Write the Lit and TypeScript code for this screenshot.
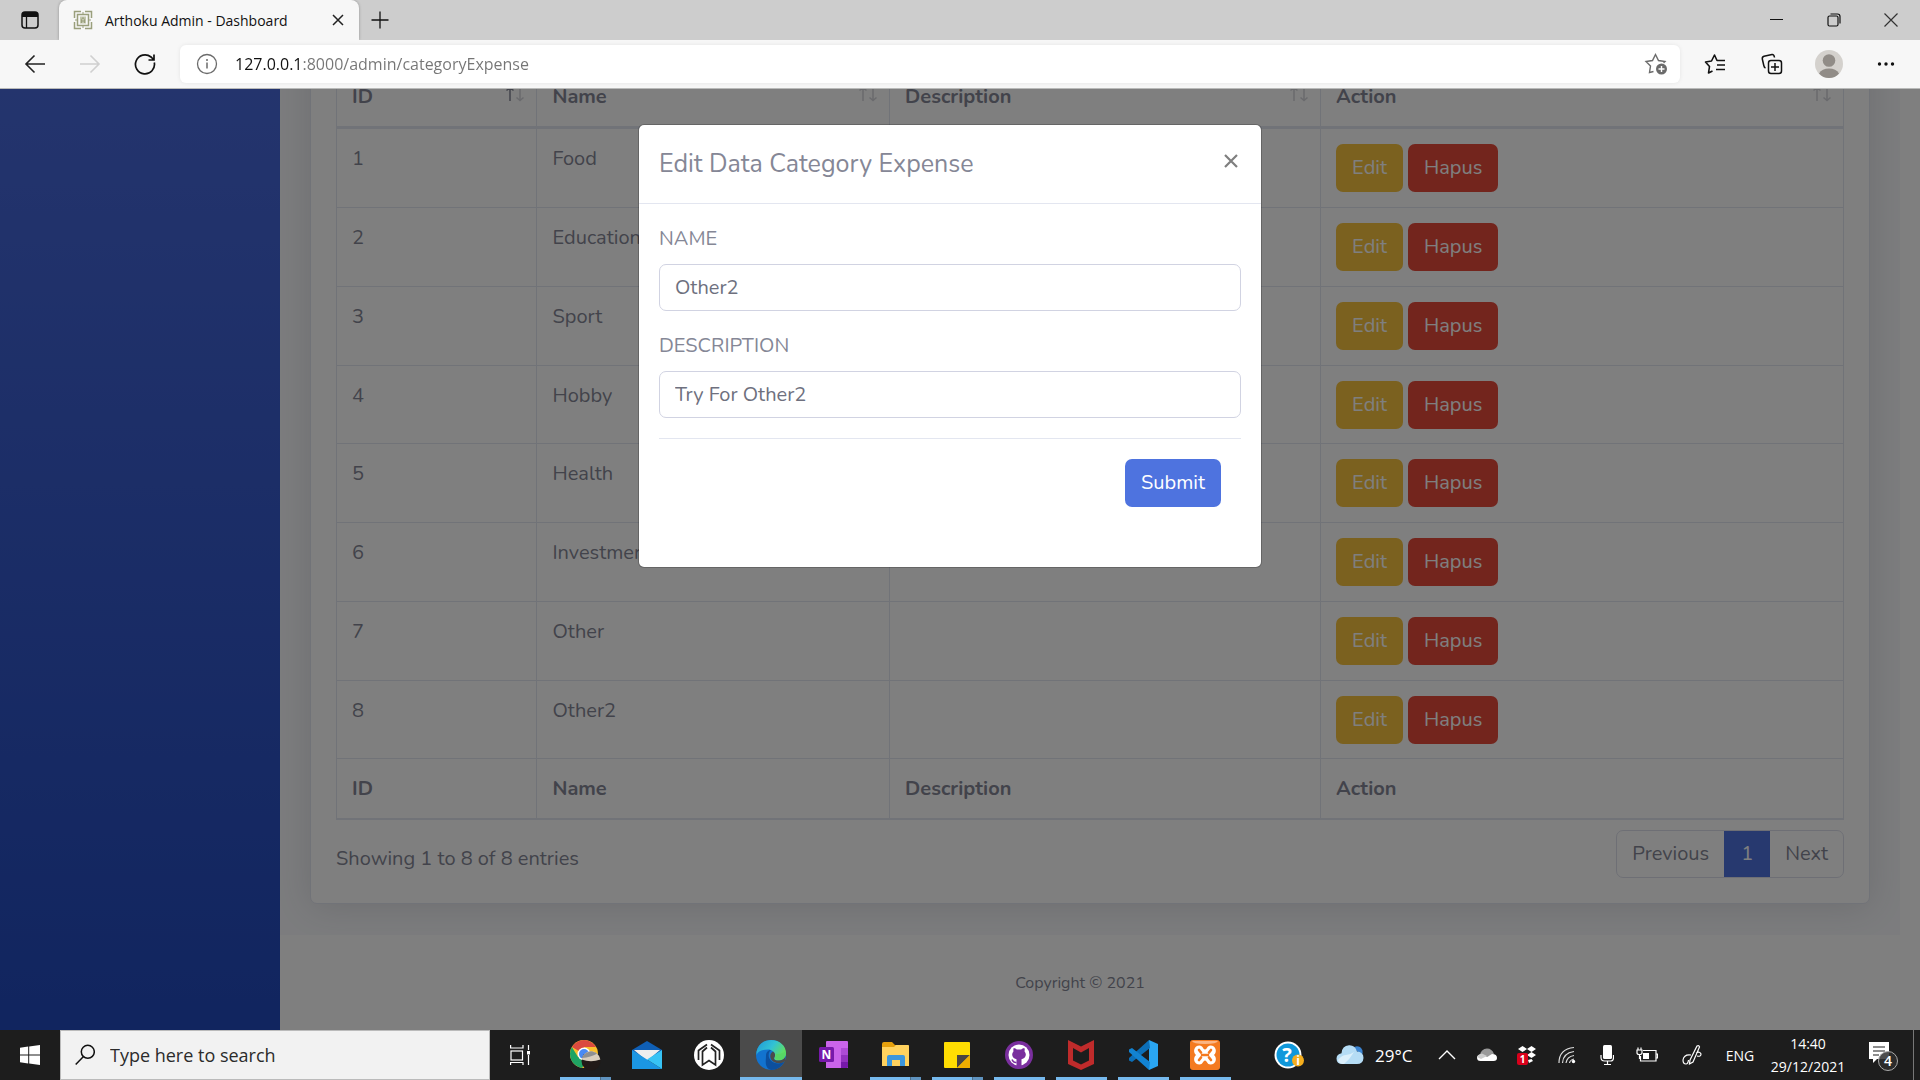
import { LitElement, html, svg, css } from "lit";
import { customElement, property, state } from "lit/decorators.js";
import { classMap } from "lit/directives/class-map.js";

const reset = css`
  * { box-sizing: border-box; }
  button, input { font: inherit; color: inherit; margin: 0; }
  button { border: 0; background: none; padding: 0; }
  a { color: inherit; text-decoration: none; }
  svg { display: block; flex: none; }
`;

/* ---------- Browser chrome ---------- */

@customElement("browser-bar")
class BrowserBar extends LitElement {
  static styles = [reset, css`
    :host { display: block; font-family: "Segoe UI", "Open Sans", "Noto Sans", sans-serif; color: #111; }
    .tabs { display: flex; height: 40px; background: #cdcdcd; align-items: stretch; }
    .menu { width: 59px; display: grid; place-items: center; border-radius: 0 0 6px 0; }
    .tab { width: 300px; background: #f7f7f7; border-radius: 8px 8px 0 0; display: flex; align-items: center; padding: 0 12px 0 14px; gap: 12px; font-size: 14px; box-shadow: 0 0 3px rgba(0, 0, 0, .3); }
    .title { flex: 1; white-space: nowrap; }
    .new { width: 42px; display: grid; place-items: center; }
    .windows { margin-left: auto; padding-right: 1px; display: flex; }
    .windows button { width: 57px; display: grid; place-items: center; }
    .tools { position: relative; display: flex; height: 49px; background: #f7f7f7; border-bottom: 1px solid #b9bab9; align-items: center; }
    .nav { display: flex; width: 180px; padding-left: 7px; }
    .nav button { width: 55px; display: grid; place-items: center; }
    .address { flex: 1; height: 38px; background: #fff; border-radius: 6px; display: flex; align-items: center; padding: 0 12px 0 16px; gap: 17px; box-shadow: 0 0 4px rgba(0, 0, 0, .08); }
    .url { flex: 1; min-width: 0; height: 30px; border: 0; padding: 0; outline: 0; font-size: 16px; color: transparent; background: linear-gradient(90deg, #111 67px, #757575 67px); -webkit-background-clip: text; background-clip: text; }
    .actions { display: flex; width: 240px; padding: 0 6px; }
    .actions button { flex: 1; display: grid; place-items: center; }
  `];

  render() {
    return html`
      <div class="tabs">
        <button class="menu" aria-label="Tab actions">
          <svg width="20" height="20" viewBox="0 0 20 20"><rect x="2" y="2" width="16" height="16" rx="3" fill="none" stroke="#111" stroke-width="1.5"/><path d="M2 7V4.500Q2 2 4.500 2H15.500Q18 2 18 4.500V7Z" fill="#111"/><path d="M6.500 6V18" stroke="#111" stroke-width="1.300"/></svg>
        </button>
        <div class="tab">
          <svg width="20" height="20" viewBox="0 0 20 20" fill="none" stroke="#9a9f7c" stroke-width="1.500"><path d="M8 1.500H1.500V8M1.500 12V18.500H8M12 18.500H18.500V12M18.500 8V1.500H12"/><rect x="4.500" y="4.500" width="11" height="11"/><rect x="7" y="6.500" width="6" height="7" fill="#c3c7ae" stroke="none"/><path d="M8.500 13V9.500L10 7.500L11.500 9.500V13M8.500 11H11.500M10 2V4.500M10 15.500V18M2 10H4.500M15.500 10H18" stroke-width="1"/></svg>
          <span class="title">Arthoku Admin - Dashboard</span>
          <button aria-label="Close tab"><svg width="18" height="18" viewBox="0 0 18 18" stroke="#222" stroke-width="1.500"><path d="M4 4L14 14M14 4L4 14"/></svg></button>
        </div>
        <button class="new" aria-label="New tab"><svg width="20" height="20" viewBox="0 0 20 20" stroke="#111" stroke-width="1.300"><path d="M10 1.500V18.500M1.500 10H18.500"/></svg></button>
        <div class="windows">
          <button aria-label="Minimize"><svg width="14" height="14" viewBox="0 0 14 14" stroke="#111"><path d="M0 6.500H13"/></svg></button>
          <button aria-label="Restore"><svg width="14" height="14" viewBox="0 0 14 14" fill="none" stroke="#111" stroke-width="1.200"><rect x="1" y="3" width="10" height="10" rx="1.500"/><path d="M3.500 1H10.500Q13 1 13 3.500V10.500"/></svg></button>
          <button aria-label="Close"><svg width="14" height="14" viewBox="0 0 14 14" stroke="#333" stroke-width="1.200"><path d="M.5.500L13.500 13.500M13.500.500L.5 13.500"/></svg></button>
        </div>
      </div>
      <div class="tools">
        <div class="nav">
          <button aria-label="Back"><svg width="22" height="22" viewBox="0 0 22 22" fill="none" stroke="#222" stroke-width="1.600"><path d="M21 11H2M10.500 2.500L2 11L10.500 19.500"/></svg></button>
          <button aria-label="Forward" disabled><svg width="22" height="22" viewBox="0 0 22 22" fill="none" stroke="#d0d0d0" stroke-width="1.600"><path d="M1 11H20M11.500 2.500L20 11L11.500 19.500"/></svg></button>
          <button aria-label="Refresh"><svg width="22" height="22" viewBox="0 0 22 22" fill="none" stroke="#111" stroke-width="1.700"><path d="M20.300 9.500A9.500 9.500 0 1 1 17 4L19.500 6.500M20 1.500V7H14.500"/></svg></button>
        </div>
        <div class="address">
          <svg width="22" height="22" viewBox="0 0 22 22" fill="none" stroke="#6b6b6b" stroke-width="1.300"><circle cx="11" cy="11" r="9.500"/><path d="M11 9.500V15.500M11 6V8" stroke-width="1.500"/></svg>
          <input class="url" type="text" aria-label="Address" spellcheck="false" value="127.0.0.1:8000/admin/categoryExpense">
          <button aria-label="Add this page to favorites"><svg width="24" height="24" viewBox="0 0 24 24" fill="none" stroke="#6b6b6b" stroke-width="1.400"><path d="M9.500 19.500L5.500 20.500L6.500 14L2 9.500L8.500 8.500L11.500 2.500L14.500 8.500L21 9.500L19.500 11"/><circle cx="17.500" cy="17" r="5.500" fill="#6b6b6b" stroke="none"/><path d="M17.500 14V20M14.500 17H20.500" stroke="#fff"/></svg></button>
        </div>
        <div class="actions">
          <button aria-label="Favorites"><svg width="22" height="22" viewBox="0 0 22 22" fill="none" stroke="#111" stroke-width="1.600" stroke-linejoin="round"><path d="M8.500 18L4.500 20L5.500 13.500L1.500 9L7.500 8L10.500 2L13 7.500H21M13 12H21M12 16.500H21"/></svg></button>
          <button aria-label="Collections"><svg width="22" height="22" viewBox="0 0 22 22" fill="none" stroke="#111" stroke-width="1.500" stroke-linejoin="round"><path d="M4.500 15Q3.200 14.500 2.800 12.500L1.300 6Q1 4 3 3.300L11 1.500Q13 1.200 13.500 4.500"/><rect x="7.500" y="7.500" width="13" height="13" rx="2.500"/><path d="M14 10V18M10 14H18"/></svg></button>
          <button aria-label="Profile"><svg width="28" height="28" viewBox="0 0 28 28"><circle cx="14" cy="14" r="14" fill="#d4d1cd"/><circle cx="14" cy="10.500" r="6.300" fill="#918c87"/><path d="M4 23.500Q7 18.500 14 18.500T24 23.500Q20 28 14 28T4 23.500Z" fill="#918c87"/></svg></button>
          <button aria-label="Settings and more"><svg width="18" height="18" viewBox="0 0 18 18" fill="#111"><circle cx="2.500" cy="9" r="1.700"/><circle cx="9" cy="9" r="1.700"/><circle cx="15.500" cy="9" r="1.700"/></svg></button>
        </div>
      </div>`;
  }
}

/* ---------- Modal ---------- */

@customElement("edit-dialog")
class EditDialog extends LitElement {
  @property() name = "";
  @property() description = "";

  static styles = [reset, css`
    :host { display: block; width: 624px; max-width: 100%; }
    .dialog { background: #fff; border: 1px solid rgba(0, 0, 0, .2); background-clip: padding-box; border-radius: 6px; }
    .head { display: flex; justify-content: space-between; align-items: flex-start; padding: 20px; border-bottom: 1px solid #e3e6f0; }
    .heading { margin: 0; font-size: 25px; line-height: 38px; font-weight: 400; }
    .close { width: 20px; height: 32px; display: grid; place-items: center; }
    .body { padding: 20px; }
    .label { display: block; line-height: 30px; margin-bottom: 10px; }
    .field { display: block; width: 100%; height: 47px; padding: 0 15px; margin-bottom: 20px; border: 1px solid #d1d3e2; border-radius: 7px; color: #6e707e; background: #fff; outline: 0; }
    .foot { border-top: 1px solid #e3e6f0; padding: 20px 20px 40px; display: flex; justify-content: flex-end; }
    .submit { height: 48px; padding: 0 16px; border-radius: 7px; background: #4e73df; color: #fff; }
  `];

  render() {
    return html`
      <form class="dialog" role="dialog" aria-labelledby="heading" @submit=${(e: Event) => e.preventDefault()}>
        <div class="head">
          <h5 class="heading" id="heading">Edit Data Category Expense</h5>
          <button class="close" type="button" aria-label="Close">
            <svg width="16" height="16" viewBox="0 0 16 16" stroke="#7f7f7f" stroke-width="2.200"><path d="M2 2L14 14M14 2L2 14"/></svg>
          </button>
        </div>
        <div class="body">
          <label class="label" for="name">NAME</label>
          <input class="field" id="name" type="text" .value=${this.name}>
          <label class="label" for="description">DESCRIPTION</label>
          <input class="field" id="description" type="text" .value=${this.description}>
          <div class="foot"><button class="submit" type="submit">Submit</button></div>
        </div>
      </form>`;
  }
}

/* ---------- Admin page ---------- */

@customElement("category-page")
class CategoryPage extends LitElement {
  @state() private rows = ["Food", "Education", "Sport", "Hobby", "Health", "Investment", "Other", "Other2"];
  private columns = ["ID", "Name", "Description", "Action"];

  static styles = [reset, css`
    :host { position: relative; display: flex; min-height: 0; overflow: hidden; background: #fff; font-family: Nunito, Lato, "Open Sans", sans-serif; font-size: 20px; line-height: 30px; color: #858796; }
    .sidebar { width: 280px; flex: none; background: linear-gradient(180deg, #4869db, #224abe); }
    .main { flex: 1; min-width: 0; display: flex; flex-direction: column; justify-content: flex-end; padding-right: 20px; }
    .content { flex: none; background: #f8f9fc; padding: 0 30px 31px; overflow: hidden; }
    .card { background: #fff; border: 1px solid #e3e6f0; border-radius: 7px; padding: 25px; box-shadow: 0 3px 35px rgba(58, 59, 69, .15); }
    .table { width: 100%; table-layout: fixed; border-collapse: collapse; border: 1px solid #e3e6f0; }
    .c1 { width: 13.3%; } .c2 { width: 23.4%; } .c3 { width: 28.6%; }
    th, td { border: 1px solid #e3e6f0; padding: 15px; text-align: left; vertical-align: top; }
    tbody tr:nth-child(4n) td { padding-bottom: 14px; }
    th { font-weight: 700; }
    thead th { border-bottom: 3px solid #e3e6f0; padding: 14px 10px 14px 15px; }
    tfoot th { border-bottom: 2px solid #e3e6f0; padding-bottom: 14px; }
    .sortable { display: flex; justify-content: space-between; }
    .sort { opacity: .35; }
    .sort.active { opacity: 1; }
    .dim { opacity: .35; }
    .buttons { display: flex; gap: 5px; }
    .btn { height: 48px; padding: 0 16px; border-radius: 7px; color: #fff; }
    .edit { background: #f6c23e; }
    .delete { background: #e74a3b; }
    .under { display: flex; justify-content: space-between; align-items: flex-start; padding-top: 10px; }
    .info { padding-top: 14px; }
    .pages { display: flex; border: 1px solid #dddfeb; border-radius: 7px; overflow: hidden; }
    .page { padding: 8px 15px; }
    .current { background: #4e73df; color: #fff; padding: 8px 17px; }
    .footer { flex: none; background: #fff; padding: 33px 20px 32px 0; font-size: 16px; text-align: center; }
    .overlay { position: absolute; inset: 0; background: rgba(0, 0, 0, .5); padding: 35px 20px 0 0; display: flex; justify-content: center; align-items: flex-start; }
  `];

  private arrows(active: boolean) {
    return html`<svg class=${classMap({ sort: true, active })} width="22" height="30" viewBox="0 0 22 30" fill="none" stroke="#858796" stroke-width="1.500"><path d="M6 19V5.500M2.500 8.500L6 5.500L9.500 8.500" /><path class=${active ? "dim" : ""} d="M16 5V18.500M12.500 15.500L16 18.500L19.500 15.500"/></svg>`;
  }

  render() {
    return html`
      <nav class="sidebar" aria-label="Main"></nav>
      <div class="main">
        <main class="content">
          <div class="card">
            <table class="table">
              <colgroup><col class="c1"><col class="c2"><col class="c3"><col></colgroup>
              <thead><tr>${this.columns.map((c, i) => html`<th><div class="sortable">${c}${this.arrows(i === 0)}</div></th>`)}</tr></thead>
              <tbody>
                ${this.rows.map((name, i) => html`
                  <tr>
                    <td>${i + 1}</td><td>${name}</td><td></td>
                    <td><div class="buttons"><button class="btn edit">Edit</button><button class="btn delete">Hapus</button></div></td>
                  </tr>`)}
              </tbody>
              <tfoot><tr>${this.columns.map((c) => html`<th>${c}</th>`)}</tr></tfoot>
            </table>
            <div class="under">
              <div class="info">Showing 1 to 8 of 8 entries</div>
              <div class="pages"><a class="page" href="#">Previous</a><a class="page current" href="#">1</a><a class="page" href="#">Next</a></div>
            </div>
          </div>
        </main>
        <footer class="footer">Copyright © 2021</footer>
      </div>
      <div class="overlay"><edit-dialog name="Other2" description="Try For Other2"></edit-dialog></div>`;
  }
}

/* ---------- Taskbar ---------- */

const icon = {
  chrome: svg`<circle cx="15" cy="15" r="14" fill="#fbc02d"/><path d="M15 15L2.900 8A14 14 0 0 1 27.100 8H15Z" fill="#db4a3f"/><path d="M2.900 8A14 14 0 0 0 13 28.900L18.500 20L9 18Z" fill="#1fa463"/><circle cx="15" cy="15" r="6.500" fill="#fff"/><circle cx="15" cy="15" r="5" fill="#4a8af4"/><circle cx="22" cy="22" r="9.500" fill="#221a17"/><path d="M12.600 20.500A9.500 9.500 0 0 1 31.400 20.500Q22 24 12.600 20.500Z" fill="#d9cdbd"/><path d="M13 19A9.500 9.500 0 0 1 28 14.700Q22 18 13 19Z" fill="#8e8f91"/>`,
  mail: svg`<path d="M1 11L16 2L31 11V17H1Z" fill="#0f5fb5"/><path d="M3 11H29L16 22Z" fill="#eee"/><path d="M1 11L31 30H1Z" fill="#1b96e3"/><path d="M31 11V30L16 20.500Z" fill="#37c3f5"/>`,
  white: svg`<circle cx="16" cy="16" r="15" fill="#fff"/><path d="M5.500 21V11.500L14 5.500M26.500 21V11.500L18 5.500M14 8.500L9.500 12.500V26L16 21.500L22.500 26V12.500L18 8.500" fill="none" stroke="#222" stroke-width="1.700"/>`,
  edge: svg`<circle cx="16" cy="16" r="15" fill="#1273cf"/><path d="M1.500 13C3 5 9 1 16 1C25 1 31 7 31 14C31 19 27.500 21.500 23.500 21.500C20 21.500 18.500 20 19.500 18C21 14 17.500 10.500 13 10.500C7.500 10.500 3 12 1.500 16Z" fill="url(#edgeTop)"/><path d="M11 17C11 13.500 13 11 16 11C12 14 13 22 20 24C24 25 27 24 29.300 22.500C26.500 28 22 31 16 31C9 29 11 21 11 17Z" fill="#0c4f9e"/><path d="M18 12.500C20.500 14 20.500 17 19.300 18.500C18.300 20.500 20 21.700 24 21.500C27 21.300 29 20 30.300 18L30 22.300C27 24.500 23 25 19 23C14.500 20.500 14 15 18 12.500Z" fill="#4b4b4b"/><path d="M21 20C19.500 18.800 21 16.500 20.800 14.500C24 16 28 14 30.900 12.500C31.500 19 26.500 22.500 21 20Z" fill="#57d565"/><defs><linearGradient id="edgeTop" x1="0" y1="0" x2="1" y2=".5"><stop offset="0" stop-color="#1f97d8"/><stop offset=".55" stop-color="#32c2d4"/><stop offset="1" stop-color="#63df5a"/></linearGradient></defs>`,
  onenote: svg`<path d="M9 3Q9 2 10 2H30Q31 2 31 3V29H9Z" fill="#ca64ea"/><path d="M24 9H31V16H24Z" fill="#ae4bd5"/><path d="M24 16H31V23H24Z" fill="#9332bf"/><path d="M24 23H31V28Q31 29 30 29H24Z" fill="#7719aa"/><rect x="2" y="8" width="15" height="15" rx="1.500" fill="#7719aa"/><text x="9.500" y="20" font-size="12" font-weight="700" text-anchor="middle" fill="#fff">N</text>`,
  files: svg`<path d="M3 5Q3 3 5 3H13L16 6H28Q30 6 30 8V27H3Z" fill="#e5a00d"/><path d="M3 8H15L17 6H29Q30 6 30 7V27H3Z" fill="#ffd25e"/><path d="M8 27V18Q8 16 10 16H24Q26 16 26 18V27H21V21H13V27Z" fill="#3c96dc"/>`,
  sticky: svg`<rect x="3" y="3" width="26" height="26" rx="1" fill="#ffdd02"/><path d="M16 29V16H29Z" fill="#4a4541"/><path d="M16 29L29 16V28Q29 29 28 29Z" fill="#f0ae00"/>`,
  github: svg`<circle cx="16" cy="16" r="14" fill="#7a2f9e"/><circle cx="16" cy="16" r="10.500" fill="#fff"/><path d="M10.700 9C12 9 13 9.800 13.800 10.400H18.200C19 9.800 20 9 21.300 9C22 10.500 21.700 11.500 21.500 12.200C24 15 23 19.500 18.500 20.300V27H13.500V20.300C9 19.500 8 15 10.500 12.200C10.200 11 10.300 10 10.700 9Z" fill="#7a2f9e"/><path d="M13.500 23.500Q10.500 24 9 20.500" stroke="#7a2f9e" stroke-width="1.500" fill="none"/>`,
  mcafee: svg`<path d="M3 1L16 7.500L29 1V25L16 31L3 25Z" fill="#bf2b2b"/><path d="M8 9L16 13.500L24 9V21.500L16 25.500L8 21.500Z" fill="#1d1d1d"/>`,
  code: svg`<path d="M22 1L31 5V27L22 31Z" fill="#2aa6f2"/><path d="M22 1L23 9L5 23L2 21.500V19Z" fill="#0c6fb8"/><path d="M22 31L23 23L5 9L2 10.500V13Z" fill="#1283d2"/>`,
  xampp: svg`<rect x="1" y="1" width="30" height="30" rx="3" fill="#f47a20"/><path d="M3 2H29Q28 5 16 5T3 2Z" fill="#fbb583"/><path d="M10.500 6.500C14 6.500 14 10.500 16 10.500S18 6.500 21.500 6.500C27 6.500 28.500 13 25 16C28.500 19 27 25.500 21.500 25.500C18 25.500 18 21.500 16 21.500S14 25.500 10.500 25.500C5 25.500 3.500 19 7 16C3.500 13 5 6.500 10.500 6.500Z" fill="#fff"/><g stroke="#f47a20" stroke-width="2.600" stroke-linecap="round"><path d="M10 11L12 13.500M22 11L20 13.500M10 21L12 18.500M22 21L20 18.500M13 16H19"/></g>`,
};

@customElement("task-bar")
class TaskBar extends LitElement {
  private apps = [
    { name: "Chrome", art: icon.chrome, run: "stacked" },
    { name: "Mail", art: icon.mail, run: "" },
    { name: "Launcher", art: icon.white, run: "" },
    { name: "Edge", art: icon.edge, run: "focused" },
    { name: "OneNote", art: icon.onenote, run: "" },
    { name: "File Explorer", art: icon.files, run: "stacked" },
    { name: "Sticky Notes", art: icon.sticky, run: "stacked" },
    { name: "GitHub Desktop", art: icon.github, run: "open" },
    { name: "McAfee", art: icon.mcafee, run: "open" },
    { name: "Visual Studio Code", art: icon.code, run: "open" },
    { name: "XAMPP", art: icon.xampp, run: "open" },
  ];

  static styles = [reset, css`
    :host { display: flex; height: 50px; background: #1d1d1d; color: #fff; font-family: "Segoe UI", "Open Sans", "Noto Sans", sans-serif; font-size: 14px; }
    .start { width: 60px; display: grid; place-items: center; }
    .search { width: 430px; display: flex; align-items: center; gap: 15px; padding: 0 14px; background: #f2f2f2; border: 1px solid #bbb; color: #222; font-size: 18px; }
    .query { flex: 1; min-width: 0; border: 0; padding: 0; background: none; outline: 0; }
    .query::placeholder { color: #2b2b2b; opacity: 1; }
    .view { width: 64px; display: flex; align-items: center; padding-left: 20px; }
    .app { width: 62px; display: grid; place-items: center; padding-top: 3px; grid-template-rows: 1fr 3px; }
    .app::after { content: ""; width: 51px; height: 3px; }
    .open::after { background: #76b9ed; }
    .stacked::after { background: linear-gradient(90deg, #76b9ed 40px, #4f6f8a 40px, #4f6f8a 41px, #5f93bf 41px); }
    .focused { background: #4b4b4b; }
    .focused::after { width: 100%; background: #76b9ed; }
    .tray { margin-left: auto; display: flex; }
    .tray button { width: 40px; display: grid; place-items: center; }
    .tray .help { width: 68px; }
    .tray .weather { width: 104px; display: flex; align-items: center; gap: 11px; padding-left: 13px; font-size: 17px; white-space: nowrap; }
    .tray .pen { width: 50px; }
    .tray .lang { width: 46px; }
    .tray .clock { width: 90px; align-content: center; line-height: 23px; }
    .tray .notes { width: 61px; border-right: 1px solid #777; margin-right: 6px; }
  `];

  render() {
    return html`
      <button class="start" aria-label="Start"><svg width="20" height="20" viewBox="0 0 20 20" fill="#fff"><path d="M0 2.700L8.200 1.600V9.500H0ZM9.200 1.500L20 0V9.500H9.200ZM0 10.500H8.200V18.400L0 17.300ZM9.200 10.500H20V20L9.200 18.500Z"/></svg></button>
      <label class="search">
        <svg width="20" height="22" viewBox="0 0 20 22" fill="none" stroke="#111" stroke-width="1.500"><circle cx="12.800" cy="7.800" r="6.500"/><path d="M8.500 12.500L.7 20.500"/></svg>
        <input class="query" type="text" placeholder="Type here to search" aria-label="Search">
      </label>
      <button class="view" aria-label="Task view"><svg width="20" height="20" viewBox="0 0 20 20" fill="none" stroke="#fff" stroke-width="1.200"><rect x="1" y="6" width="11.500" height="9"/><path d="M.6 0V3H13V0M.6 20V17.500H13V20M18.500 0V5M18.500 10V20"/><path d="M17 6H20V9.500H17Z" fill="#fff" stroke="none"/></svg></button>
      ${this.apps.map((a) => html`<button class="app ${a.run}" aria-label=${a.name}><svg width="32" height="32" viewBox="0 0 32 32">${a.art}</svg></button>`)}
      <div class="tray">
        <button class="help" aria-label="Help"><svg width="30" height="28" viewBox="0 0 30 28"><circle cx="14" cy="14" r="13.500" fill="#fff"/><circle cx="14" cy="14" r="11.500" fill="#0f98db"/><text x="13" y="21" font-size="20" font-weight="700" text-anchor="middle" fill="#fff">?</text><circle cx="24" cy="19.500" r="6" fill="#f5ae1d"/><text x="24" y="24" font-size="12" font-weight="700" text-anchor="middle" fill="#fff">i</text></svg></button>
        <button class="weather"><svg width="28" height="24" viewBox="0 0 28 24"><path d="M17 5Q20 2 24 4Q28 7 26 12Z" fill="#3b83d0"/><path d="M6.500 21Q.5 21 .5 15.500Q.7 11 5.500 10.200Q6 3 13 2.300Q19 2 21 8.500Q27.500 9 27.500 15Q27 21 21 21Z" fill="#b5dcf5"/><path d="M6.500 21Q2.500 20.500 2 17Q6 12 10 12T18 9Q14 16 8 21Z" fill="#dcf0fc"/></svg>29°C</button>
        <button aria-label="Show hidden icons"><svg width="18" height="12" viewBox="0 0 18 12" fill="none" stroke="#fff" stroke-width="1.400"><path d="M1 10L9 2L17 10"/></svg></button>
        <button aria-label="OneDrive"><svg width="20" height="20" viewBox="0 0 20 20"><path d="M3 10Q4 4 10 3.500Q15 3.500 17 9L8 13Z" fill="#999"/><path d="M3.500 16Q0 16 0 12.500Q.5 9 5 9.500L10 12L15 9Q20 9 20 13Q20 16 16.500 16Z" fill="#fff"/><path d="M0 12Q1 9 5 8.500L10 11L4 14Z" fill="#ccc"/></svg></button>
        <button aria-label="Dropbox"><svg width="20" height="20" viewBox="0 0 20 20"><path d="M1 4L5.500 1L10 4L14.500 1L19 4L14.500 7L10 4L5.500 7ZM10 10L14.500 7L19 10L14.500 13ZM11 15L14.500 14L16 16L12 18Z" fill="#fff"/><rect x="0" y="8" width="11" height="12" rx="2" fill="#d9001b"/><text x="5.500" y="17.500" font-size="10" font-weight="700" text-anchor="middle" fill="#fff">1</text></svg></button>
        <button aria-label="Network"><svg width="18" height="18" viewBox="0 0 18 18" fill="none" stroke="#ddd" stroke-width="1.200"><path d="M1 17Q1 3 16 1.500M4.500 17Q5 7 16 5.500M8 17Q9 10.500 16 9.500M11.500 17Q12 14 16 13"/><circle cx="15.500" cy="15.500" r="1.700" fill="#fff" stroke="none"/></svg></button>
        <button aria-label="Microphone"><svg width="14" height="20" viewBox="0 0 14 20"><rect x="3" width="9" height="14" rx="1.500" fill="#fff"/><path d="M1 10V12.500Q1 16 4.500 16H10.500Q13.500 16 13.500 12.500V10M7.500 16V19.500M4 19.500H11" fill="none" stroke="#fff" stroke-width="1.200"/></svg></button>
        <button aria-label="Battery"><svg width="22" height="18" viewBox="0 0 22 18" fill="none" stroke="#fff" stroke-width="1.200"><path d="M7 4.500H20V15H4.500V10M20 8H21.500V12H20M1 4H6V7Q6 8.500 3.500 8.500T1 7ZM2 1.500V4M5 1.500V4M3.500 8.500V13"/><path d="M7 7H13V13H7Z" fill="#fff" stroke="none"/></svg></button>
        <button class="pen" aria-label="Ink workspace"><svg width="20" height="22" viewBox="0 0 20 22" fill="none" stroke="#fff" stroke-width="1.200"><path d="M8 16L15 2Q17 1 17.500 3L11 18L7.500 20ZM9 11Q2 10 1 16Q1 20 4 20Q6 20 6.500 16M14 9Q18 7 19 10Q19 13 15 12"/></svg></button>
        <button class="lang">ENG</button>
        <button class="clock"><span>14:40</span><span>29/12/2021</span></button>
        <button class="notes" aria-label="Notifications"><svg width="30" height="32" viewBox="0 0 30 32"><path d="M1 3H21V20H9L5 24V20H1Z" fill="#fff"/><path d="M5 8H17M5 12H17M5 16H11" stroke="#1d1d1d" stroke-width="1.200"/><circle cx="20" cy="22" r="9.500" fill="#2e2e2e" fill-opacity=".85" stroke="#aaa"/><text x="20" y="27" font-size="14" font-weight="600" text-anchor="middle" fill="#fff">4</text></svg></button>
      </div>`;
  }
}

@customElement("app-root")
class AppRoot extends LitElement {
  static styles = css`
    :host { display: grid; grid-template-rows: auto minmax(0, 1fr) auto; grid-template-columns: minmax(0, 1fr); height: 100vh; }
  `;
  render() {
    return html`<browser-bar></browser-bar><category-page></category-page><task-bar></task-bar>`;
  }
}
